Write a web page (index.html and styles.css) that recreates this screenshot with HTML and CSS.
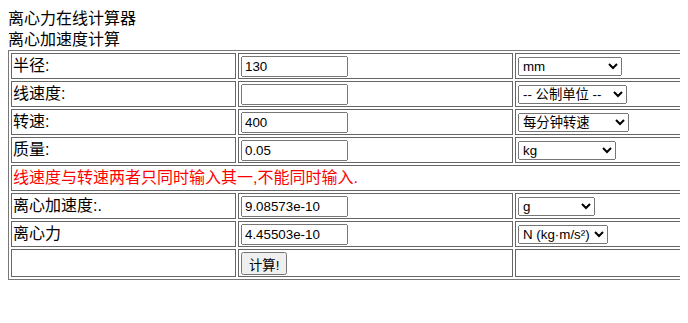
FILE: index.html
```html
<!DOCTYPE html>
<html>
<head>
<meta charset="utf-8">
<title>离心力在线计算器</title>
<link rel="stylesheet" href="styles.css">
</head>
<body>
<div class="title">离心力在线计算器</div>
<div class="title">离心加速度计算</div>
<table class="calc">
  <tr>
    <td class="c1">半径:</td>
    <td class="c2"><input type="text" value="130"></td>
    <td class="c3"><select class="s-mm"><option>mm</option></select></td>
  </tr>
  <tr>
    <td>线速度:</td>
    <td><input type="text" value=""></td>
    <td><select class="s-metric"><option>-- 公制单位 --</option></select></td>
  </tr>
  <tr>
    <td>转速:</td>
    <td><input type="text" value="400"></td>
    <td><select class="s-rpm"><option>每分钟转速</option></select></td>
  </tr>
  <tr>
    <td>质量:</td>
    <td><input type="text" value="0.05"></td>
    <td><select class="s-kg"><option>kg</option></select></td>
  </tr>
  <tr>
    <td colspan="3" class="note">线速度与转速两者只同时输入其一,不能同时输入.</td>
  </tr>
  <tr>
    <td>离心加速度:.</td>
    <td><input type="text" value="9.08573e-10"></td>
    <td><select class="s-g"><option>g</option></select></td>
  </tr>
  <tr>
    <td>离心力</td>
    <td><input type="text" value="4.45503e-10"></td>
    <td><select class="s-n"><option>N (kg·m/s²)</option></select></td>
  </tr>
  <tr class="last">
    <td></td>
    <td><button type="button">计算!</button></td>
    <td></td>
  </tr>
</table>
</body>
</html>
```

FILE: styles.css
```css
html {
  overflow: hidden;
}
body {
  margin: 8px;
  font-family: "Liberation Sans", "Noto Sans CJK SC", sans-serif;
  font-size: 16px;
  color: #000;
  background: #fff;
}
.title {
  line-height: 21px;
  height: 21px;
}
.calc {
  table-layout: fixed;
  width: 760px;
  border-collapse: separate;
  border-spacing: 2px;
  border: 1px solid #777;
}
.calc td {
  box-sizing: border-box;
  border: 1px solid #666;
  padding: 1px;
  height: 26px;
  vertical-align: middle;
  line-height: 20px;
  white-space: nowrap;
}
.calc .c1 { width: 225px; }
.calc .c2 { width: 275px; }
.calc .last td { height: 28px; }
.note { color: #ff0000; }
input, select, button {
  font-family: "Liberation Sans", "Noto Sans CJK SC", sans-serif;
  font-size: 13.33px;
  vertical-align: middle;
}
input {
  box-sizing: border-box;
  width: 107px;
  height: 21px;
  margin: 0 0 0 1px;
}
select {
  box-sizing: border-box;
  height: 19px;
  margin: 0 0 0 1px;
}
.s-mm { width: 104px; }
.s-metric { width: 109px; }
.s-rpm { width: 111px; }
.s-kg { width: 98px; }
.s-g { width: 77px; }
.s-n { width: 90px; }
button {
  box-sizing: border-box;
  height: 23px;
  margin: 0 0 0 1px;
  padding: 1px 6px;
}
```
